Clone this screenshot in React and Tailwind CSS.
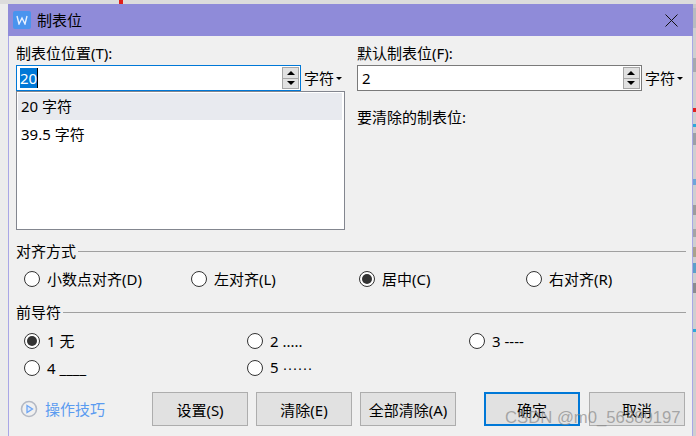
import React from "react";

const F = { fontFamily: '"Noto Sans","Noto Sans CJK SC",sans-serif' };

function Spin() {
  return (
    <div className="flex flex-col w-[17px] h-[22px] shrink-0 border border-[#a6a6a6] bg-[#e1e1e1]">
      <div className="flex-1 flex items-center justify-center border-b border-[#a6a6a6]">
        <div className="w-0 h-0 border-x-[4px] border-x-transparent border-b-[4px] border-b-black" />
      </div>
      <div className="flex-1 flex items-center justify-center">
        <div className="w-0 h-0 border-x-[4px] border-x-transparent border-t-[4px] border-t-black" />
      </div>
    </div>
  );
}

function Unit() {
  return (
    <div className="flex items-center gap-[2px] text-[15px] text-black">
      <span>字符</span>
      <div className="w-0 h-0 border-x-[3px] border-x-transparent border-t-[3px] border-t-black" />
    </div>
  );
}

function Radio({ label, checked, className = "" }) {
  return (
    <div className={"flex items-center gap-[7px] text-[15px] leading-[20px] text-black " + className}>
      <div className="w-[16px] h-[16px] rounded-full border border-[#333] bg-white flex items-center justify-center shrink-0">
        {checked && <div className="w-[10px] h-[10px] rounded-full bg-[#333]" />}
      </div>
      <span className="whitespace-pre">{label}</span>
    </div>
  );
}

function Group({ title, children }) {
  return (
    <div>
      <div className="flex items-center gap-[2px] h-[20px] text-[15px] text-black">
        <span>{title}</span>
        <div className="flex-1 h-px bg-[#a0a0a0]" />
      </div>
      {children}
    </div>
  );
}

function Btn({ children, primary, className = "" }) {
  return (
    <div className={"h-[34px] pt-[2px] flex items-center justify-center bg-[#e1e1e1] text-[15px] text-black " + (primary ? "border-2 border-[#0078d7] " : "border border-[#adadad] ") + className}>
      {children}
    </div>
  );
}

const ticks = [
  ["h-[4px]", "bg-[#c9c9c9]"], ["h-[20px]", "bg-[#b8bcc0]"], ["h-[30px]", "bg-[#cfcfcf]"], ["h-[14px]", "bg-[#a6aaae]"],
  ["h-[36px]", "bg-[#cfcfcf]"], ["h-[4px]", "bg-[#e02020]"], ["h-[12px]", "bg-[#cfcfcf]"], ["h-[3px]", "bg-[#2fa8d8]"],
  ["h-[6px]", "bg-[#cfcfcf]"], ["h-[12px]", "bg-[#9ba0a6]"], ["h-[34px]", "bg-[#cfcfcf]"], ["h-[6px]", "bg-[#6ea6d8]"],
  ["h-[20px]", "bg-[#cfcfcf]"], ["h-[10px]", "bg-[#9c9c9c]"], ["h-[14px]", "bg-[#cfcfcf]"], ["h-[8px]", "bg-[#a4a4a4]"],
  ["h-[10px]", "bg-[#cfcfcf]"], ["h-[10px]", "bg-[#a8a28c]"], ["h-[6px]", "bg-[#cfcfcf]"], ["h-[10px]", "bg-[#5e9fc8]"],
  ["h-[10px]", "bg-[#cfcfcf]"], ["h-[10px]", "bg-[#8a8c8f]"], ["h-[36px]", "bg-[#cfcfcf]"], ["h-[3px]", "bg-[#2fa8d8]"],
  ["flex-1", "bg-[#cfcfcf]"],
];

export default function App() {
  return (
    <div style={F} className="relative w-[696px] h-[436px] overflow-hidden bg-[#f1f1f1] flex flex-col">
      <div className="h-[4px] shrink-0 bg-[#dcdcdc]">
        <div className="ml-[119px] w-[4px] h-[4px] bg-[#e0201a]" />
      </div>
      <div className="flex-1 flex min-h-0">
        <div className="w-[8px] shrink-0 bg-[#ececec]" />
        <div className="w-[685px] shrink-0 bg-[#f0f0f0] border-x border-[#a9a6e6] flex flex-col">
          <div className="h-[32px] -mx-px bg-[#8f8bd9] flex items-center shrink-0 pl-[5px] pr-[15px]">
            <div className="w-[18px] h-[18px] rounded-[2px] bg-[#4a94ee] flex items-center justify-center">
              <svg width="12" height="10" viewBox="0 0 12 10" fill="none" stroke="#e8f1ff" strokeWidth="1.4"><path d="M1 1 L3 9 L6 3 L9 9 L11 1" /></svg>
            </div>
            <span className="ml-[6px] text-[15px] text-black">制表位</span>
            <svg className="ml-auto" width="13" height="13" viewBox="0 0 13 13" stroke="#111" strokeWidth="1"><path d="M0.5 0.5 L12.5 12.5 M12.5 0.5 L0.5 12.5" /></svg>
          </div>

          <div className="flex-1 pl-[7px] pr-[7px] flex flex-col">
            <div className="flex h-[194px] pt-[5px]">
              <div className="w-[329px] flex flex-col">
                <div className="h-[24px] text-[15px] leading-[24px] text-black">制表位位置(T):</div>
                <div className="flex items-center">
                  <div className="w-[285px] h-[26px] border border-[#0078d7] bg-white flex items-center pl-[3px] pr-[1px] text-[15px]">
                    <span className="bg-[#0078d7] text-white leading-[20px] border-r border-black">20</span>
                    <div className="ml-auto"><Spin /></div>
                  </div>
                  <div className="ml-[3px]"><Unit /></div>
                </div>
                <div className="flex-1 border border-[#83868f] bg-white pt-px pl-px pr-[2px] text-[15px] text-black">
                  <div className="h-[27px] leading-[27px] bg-[#e8eaef] pl-[3px]">20 字符</div>
                  <div className="h-[28px] leading-[28px] pl-[3px]">39.5 字符</div>
                </div>
              </div>
              <div className="ml-[12px] w-[326px] flex flex-col">
                <div className="h-[24px] text-[15px] leading-[24px] text-black">默认制表位(F):</div>
                <div className="flex items-center">
                  <div className="w-[285px] h-[26px] border border-[#7a7a7a] bg-white flex items-center pl-[4px] pr-[1px] text-[15px]">
                    <span>2</span>
                    <div className="ml-auto"><Spin /></div>
                  </div>
                  <div className="ml-[3px]"><Unit /></div>
                </div>
                <div className="mt-[16px] text-[15px] leading-[20px] text-black">要清除的制表位:</div>
              </div>
            </div>

            <div className="mt-[11px] mr-[-1px]">
              <Group title="对齐方式">
                <div className="flex mt-[6px] pl-[8px] h-[24px] items-center">
                  <Radio className="w-[167px]" label="小数点对齐(D)" />
                  <Radio className="w-[168px]" label="左对齐(L)" />
                  <Radio className="w-[167px]" label="居中(C)" checked />
                  <Radio label="右对齐(R)" />
                </div>
              </Group>
            </div>
            <div className="mt-[11px] mr-[-1px]">
              <Group title="前导符">
                <div className="grid grid-cols-[223px_222px_1fr] pl-[8px] mt-[5px] auto-rows-[27px]">
                  <Radio label="1 无" checked />
                  <Radio label="2 ....." />
                  <Radio label="3 ----" />
                  <Radio label="4 ____" />
                  <Radio label={<>5 <span className="font-['Liberation_Sans']">······</span></>} />
                </div>
              </Group>
            </div>

            <div className="flex items-center mt-[11px]">
              <div className="flex items-center w-[136px] pl-[4px] gap-[7px] text-[15px] text-[#5b9bf0]">
                <svg width="18" height="18" viewBox="0 0 18 18" fill="none">
                  <circle cx="9" cy="9" r="7.5" stroke="#b4b9c4" strokeWidth="1.6" />
                  <path d="M7 5.5 L12.5 9 L7 12.5 Z" stroke="#6ea6f5" strokeWidth="1.3" fill="#dbe8fb" />
                </svg>
                <span>操作技巧</span>
              </div>
              <Btn className="w-[96px]">设置(S)</Btn>
              <Btn className="w-[96px] ml-[8px]">清除(E)</Btn>
              <Btn className="w-[96px] ml-[8px]">全部清除(A)</Btn>
              <Btn primary className="w-[96px] ml-[28px]">确定</Btn>
              <Btn className="w-[96px] ml-[9px]">取消</Btn>
            </div>
          </div>
        </div>
        <div className="flex-1 flex flex-col">
          {ticks.map(([h, c], i) => (
            <div key={i} className={h + " " + c} />
          ))}
        </div>
      </div>
      <div className="absolute left-[505px] top-[408px] text-[16.7px] leading-[20px] whitespace-nowrap text-[#8a8a8a]/70 font-['Liberation_Sans']">
        CSDN @m0_56389197
      </div>
    </div>
  );
}
